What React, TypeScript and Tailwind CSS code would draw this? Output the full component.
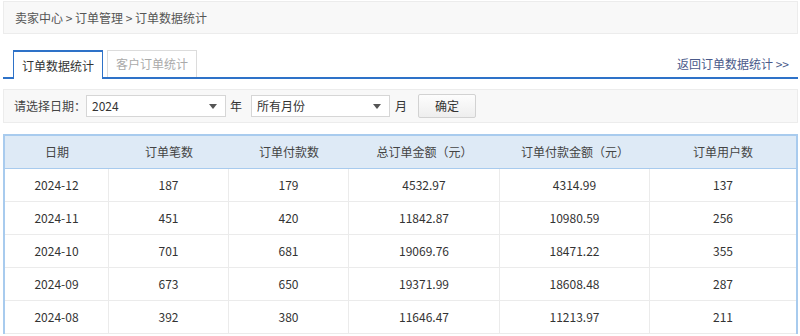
import React from "react";

const rows = [
  ["2024-12", "187", "179", "4532.97", "4314.99", "137"],
  ["2024-11", "451", "420", "11842.87", "10980.59", "256"],
  ["2024-10", "701", "681", "19069.76", "18471.22", "355"],
  ["2024-09", "673", "650", "19371.99", "18608.48", "287"],
  ["2024-08", "392", "380", "11646.47", "11213.97", "211"],
];

const headers = ["日期", "订单笔数", "订单付款数", "总订单金额（元）", "订单付款金额（元）", "订单用户数"];
const widths = ["w-[104px]", "w-[120px]", "w-[120px]", "w-[151px]", "w-[150px]", "flex-1"];

function Caret() {
  return (
    <svg width="8" height="5" viewBox="0 0 8 5" className="shrink-0">
      <path d="M0 0 L8 0 L4 5 Z" fill="#555" />
    </svg>
  );
}

export default function App() {
  return (
    <div
      className="w-[800px] h-[336px] overflow-hidden bg-white pl-[3px] pr-[2px] pt-[1px] text-[12px] text-[#333]"
      style={{ fontFamily: '"Noto Sans CJK SC", "Noto Sans", sans-serif' }}
    >
      {/* breadcrumb */}
      <div className="h-[33px] flex items-center pl-[11px] bg-[#f8f8f8] border border-[#ececec] text-[12px] text-[#555]">
        卖家中心 &gt; 订单管理 &gt; 订单数据统计
      </div>

      {/* tabs */}
      <div className="mt-[16px] flex items-end h-[29px] border-b-2 border-[#2e72c8] relative">
        <div className="ml-[10px] w-[90px] h-[29px] -mb-[2px] flex items-center justify-center bg-white border border-[#2e72c8] border-t-2 border-b-0 text-[#333]">
          订单数据统计
        </div>
        <div className="ml-[4px] w-[90px] h-[27px] flex items-center justify-center border border-[#dcdcdc] border-b-0 text-[#aaa] bg-white">
          客户订单统计
        </div>
        <div className="ml-auto mr-[9px] self-center mt-[1px] text-[#4a5a8a] text-[12px]">
          返回订单数据统计 &gt;&gt;
        </div>
      </div>

      {/* filter */}
      <div className="mt-[10px] h-[34px] flex items-center pl-[10px] bg-[#f8f8f8] border border-[#ececec] text-[12px]">
        <span className="text-[#444] w-[72px]">请选择日期：</span>
        <div className="w-[140px] h-[22px] bg-white border border-[#d6d6d6] flex items-center justify-between pl-[5px] pr-[8px]">
          <span>2024</span>
          <Caret />
        </div>
        <span className="ml-[4px] w-[21px]">年</span>
        <div className="w-[139px] h-[22px] bg-white border border-[#d6d6d6] flex items-center justify-between pl-[5px] pr-[8px]">
          <span>所有月份</span>
          <Caret />
        </div>
        <span className="ml-[5px] w-[23px]">月</span>
        <div className="w-[58px] h-[24px] border border-[#d2d2d2] rounded-[2px] bg-gradient-to-b from-[#fdfdfd] to-[#eeeeee] flex items-center justify-center text-[12px]">
          确定
        </div>
      </div>

      {/* table */}
      <div className="mt-[11px] border-2 border-[#a8cbee] border-b-0">
        <div className="flex h-[33px] bg-[#deeaf6] border-b border-[#a8cbee] text-[#444]">
          {headers.map((h, i) => (
            <div key={i} className={`${widths[i]} flex items-center justify-center`}>
              {h}
            </div>
          ))}
        </div>
        {rows.map((r, ri) => (
          <div key={ri} className="flex h-[33px] border-b border-[#ebebeb]">
            {r.map((c, i) => (
              <div
                key={i}
                className={`${widths[i]} flex items-center justify-center ${i < 5 ? "border-r border-[#ebebeb]" : ""}`}
              >
                {c}
              </div>
            ))}
          </div>
        ))}
      </div>
    </div>
  );
}
